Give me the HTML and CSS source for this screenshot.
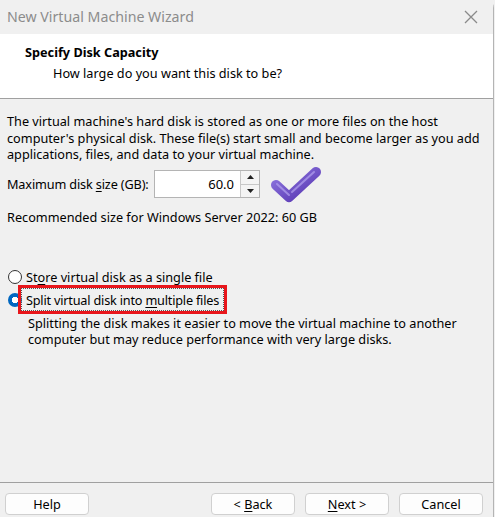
FILE: index.html
```html
<!DOCTYPE html>
<html>
<head>
<meta charset="utf-8">
<link rel="stylesheet" href="styles.css">
</head>
<body>
<div class="window">
  <div class="titlebar">
    <span class="title">New Virtual Machine Wizard</span>
    <svg class="close" width="14" height="14" viewBox="0 0 14 14"><path d="M1 1 L13 13 M13 1 L1 13" stroke="#8a8a8a" stroke-width="1.3" fill="none"/></svg>
  </div>
  <div class="header">
    <div class="h-title">Specify Disk Capacity</div>
    <div class="h-sub">How large do you want this disk to be?</div>
  </div>
  <div class="content">
    <p class="intro">The virtual machine's hard disk is stored as one or more files on the host<br>computer's physical disk. These file(s) start small and become larger as you add<br>applications, files, and data to your virtual machine.</p>
    <div class="size-row">
      <span class="label">Maximum disk <u>s</u>ize (GB):</span>
      <div class="spin">
        <div class="spin-value">60.0</div>
        <div class="spin-btns">
          <div class="spin-btn"><svg width="7" height="4" viewBox="0 0 7 4"><path d="M0 4 L3.5 0 L7 4 Z" fill="#222"/></svg></div>
          <div class="spin-btn"><svg width="7" height="4" viewBox="0 0 7 4"><path d="M0 0 L3.5 4 L7 0 Z" fill="#222"/></svg></div>
        </div>
      </div>
      <svg class="check" width="52" height="40" viewBox="0 0 52 40">
        <defs>
          <linearGradient id="g" x1="0" y1="0" x2="1" y2="1">
            <stop offset="0" stop-color="#8f78e0"/>
            <stop offset="1" stop-color="#5533b0"/>
          </linearGradient>
        </defs>
        <path d="M6 20 L19 32 L46 7" stroke="url(#g)" stroke-width="10" stroke-linecap="round" stroke-linejoin="round" fill="none"/>
        <path d="M7 19 L19 30 M22 27 L44 7" stroke="#b3a3f0" stroke-width="2" stroke-linecap="round" fill="none" opacity="0.7"/>
      </svg>
    </div>
    <p class="recommend">Recommended size for Windows Server 2022: 60 GB</p>
    <div class="options">
      <label class="radio-row"><span class="radio"></span><span class="radio-label">St<u>o</u>re virtual disk as a single file</span></label>
      <label class="radio-row"><span class="radio checked"></span><span class="radio-label highlight">Split virtual disk into <u>m</u>ultiple files</span></label>
      <p class="desc">Splitting the disk makes it easier to move the virtual machine to another<br>computer but may reduce performance with very large disks.</p>
    </div>
  </div>
  <div class="footer">
    <button class="btn">Help</button>
    <div class="right-btns">
      <button class="btn">&lt; <u>B</u>ack</button>
      <button class="btn"><u>N</u>ext &gt;</button>
      <button class="btn">Cancel</button>
    </div>
  </div>
</div>
</body>
</html>
```
FILE: styles.css
```css
html, body {
  margin: 0;
  padding: 0;
  background: #f0f0f0;
}
body {
  width: 495px;
  height: 517px;
  overflow: hidden;
  font-family: "Noto Sans", "DejaVu Sans", sans-serif;
  font-size: 12.7px;
  color: #000;
}
.window {
  width: 493px;
  height: 517px;
  border-right: 1px solid #b4b4b4;
  border-top-right-radius: 8px;
  display: flex;
  flex-direction: column;
  background: #f0f0f0;
}
.titlebar {
  height: 34px;
  display: flex;
  align-items: center;
  justify-content: space-between;
  padding: 0 15px 0 7px;
  background: #f0f0f0;
}
.title {
  font-size: 14.2px;
  color: #8c8c8c;
  padding-bottom: 1px;
}
.header {
  background: #fff;
  border-bottom: 1px solid #a0a0a0;
  box-sizing: border-box;
  padding: 10px 0 0 25px;
  height: 65px;
}
.h-title {
  font-weight: bold;
  line-height: 16px;
}
.h-sub {
  margin-top: 5px;
  padding-left: 28px;
  line-height: 16px;
}
.content {
  flex: 1;
  padding: 14px 0 0 7px;
}
.intro {
  margin: 0;
  line-height: 16.5px;
  white-space: nowrap;
}
.size-row {
  display: flex;
  align-items: center;
  margin-top: 1px;
  height: 40px;
}
.label {
  width: 147px;
  letter-spacing: -0.15px;
}
.spin {
  display: flex;
  height: 28px;
  box-sizing: border-box;
  border: 1px solid #b4b4b4;
  background: #fff;
  margin-top: 1px;
}
.spin-value {
  width: 79px;
  text-align: right;
  line-height: 26px;
  padding-right: 6px;
  font-size: 13px;
}
.spin-btns {
  width: 18px;
  display: flex;
  flex-direction: column;
  border-left: 1px solid #c8c8c8;
  background: #f4f4f4;
}
.spin-btn {
  flex: 1;
  display: flex;
  align-items: center;
  justify-content: center;
}
.spin-btn + .spin-btn {
  border-top: 1px solid #c8c8c8;
}
.check {
  margin-left: 10px;
  margin-top: 2px;
}
.recommend {
  margin: 5px 0 0 0;
  line-height: 16px;
}
.options {
  margin-top: 41px;
}
.radio-row {
  display: flex;
  align-items: center;
  height: 22px;
  margin-left: 1px;
}
.radio-row + .radio-row {
  margin-top: 1px;
}
.radio {
  width: 12px;
  height: 12px;
  border: 1px solid #333;
  border-radius: 50%;
  box-sizing: content-box;
  background: #fff;
  margin-right: 3px;
}
.radio.checked {
  width: 14px;
  height: 14px;
  border: none;
  background: radial-gradient(circle, #fff 0 3px, #0067c0 3.5px);
}
.radio-label {
  line-height: 16px;
  padding: 0 1px;
}
.radio-label.highlight {
  outline: 3px solid #e8161b;
  outline-offset: 0;
  padding: 3px 4px 2px 4px;
  margin-left: -4px;
  border: 1px dotted #555;
  position: relative;
  letter-spacing: -0.2px;
}
.desc {
  margin: 4px 0 0 21px;
  line-height: 16.5px;
  white-space: nowrap;
}
.footer {
  border-top: 1px solid #a0a0a0;
  height: 34px;
  display: flex;
  justify-content: space-between;
  align-items: flex-start;
  padding: 0 10px 0 5px;
}
.right-btns {
  display: flex;
  gap: 10px;
}
.btn {
  width: 84px;
  height: 22px;
  background: #fdfdfd;
  border: 1px solid #d0d0d0;
  border-radius: 4px;
  font-family: inherit;
  font-size: 12.7px;
  color: #000;
  padding: 0;
  margin-top: 10px;
}
u {
  text-decoration-thickness: 1px;
  text-underline-offset: 2px;
}
```
